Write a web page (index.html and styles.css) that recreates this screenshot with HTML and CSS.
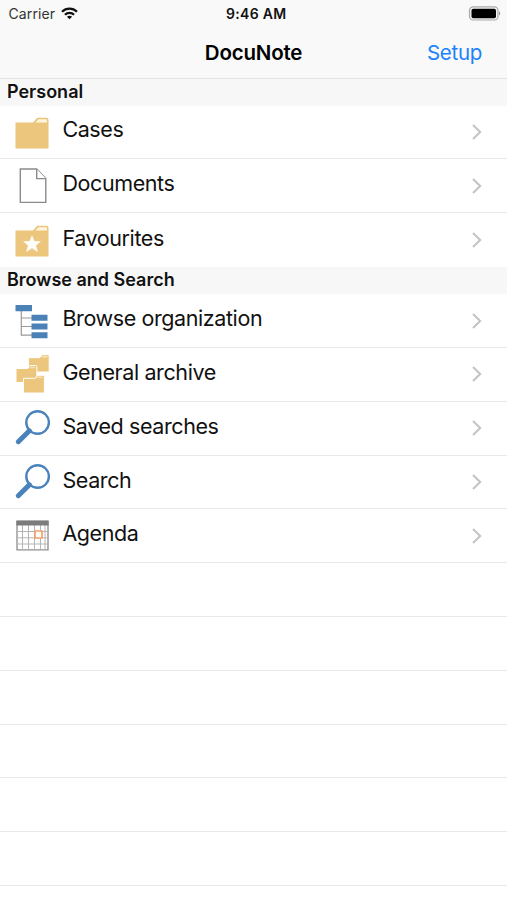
FILE: index.html
```html
<!DOCTYPE html>
<html lang="en">
<head>
<meta charset="utf-8">
<title>DocuNote</title>
<link rel="stylesheet" href="styles.css">
</head>
<body>
<svg width="0" height="0" class="defs">
  <symbol id="chevron" viewBox="0 0 12 18"><path d="M2 2l7.200 7L2 16" fill="none" stroke="#c3c3c5" stroke-width="2"/></symbol>
  <symbol id="lens" viewBox="0 0 36 36"><circle cx="23.600" cy="12.500" r="11.300" fill="none" stroke="#4a82bc" stroke-width="2.400"/><path d="M15.400 20.800L4.300 31.700" fill="none" stroke="#4a82bc" stroke-width="5" stroke-linecap="round"/></symbol>
</svg>
<header class="top">
  <div class="status">
    <div class="carrier"><span>Carrier</span>
      <svg class="wifi" width="17" height="13" viewBox="0 0 17 13"><g fill="none" stroke="#111" stroke-width="2.200"><path d="M1 4.700C5.200.5 11.800.5 16 4.700"/><path d="M3.900 7.700c2.600-2.500 6.600-2.500 9.200 0"/></g><path d="M5.900 9.700c1.500-1.400 3.700-1.400 5.200 0L8.500 12.300z" fill="#111"/></svg>
    </div>
    <div class="time">9:46 AM</div>
    <svg class="battery" width="33" height="15" viewBox="0 0 33 15"><rect x="1.500" y=".8" width="28.500" height="13.200" rx="3.600" fill="#f4f4f4" stroke="#aaa" stroke-width="1.200"/><rect x="3.500" y="2.700" width="24.500" height="9.500" rx="1.800" fill="#000"/><path d="M31 5.300c1.600.7 1.600 3.600 0 4.300z" fill="#999"/></svg>
  </div>
  <nav class="nav"><span></span><h1>DocuNote</h1><a class="setup">Setup</a></nav>
</header>
<main>
  <h2 class="section">Personal</h2>
  <div class="row">
    <svg class="icon" viewBox="0 0 36 36"><path d="M1.500 8.500h17.500l4.200-4.700h9q2.300 0 2.300 2.200v28.500h-33z" fill="#ecc67c"/><path d="M21.500 8.500l3-3.200h7.500q1 0 1 1.200v2z" fill="#fff5df"/></svg>
    <span class="label">Cases</span><svg class="chev"><use href="#chevron"/></svg>
  </div>
  <div class="row">
    <svg class="icon" viewBox="0 0 36 36"><g fill="#fff" stroke="#8b8b8b" stroke-width="1.400"><path d="M6.300 1h16.400l9.100 9.600v23.800H6.300z"/><path d="M22.700 1v9.600h9.100"/></g></svg>
    <span class="label">Documents</span><svg class="chev"><use href="#chevron"/></svg>
  </div>
  <div class="row">
    <svg class="icon" viewBox="0 0 36 36"><path d="M1.500 8.500h17.500l4.200-4.700h9q2.300 0 2.300 2.200v28.500h-33z" fill="#ecc67c"/><path d="M21.500 8.500l3-3.200h7.500q1 0 1 1.200v2z" fill="#fff5df"/><path d="M18 13.200l2.500 6h6.500l-5 4.300 1.900 6.500-5.900-3.800-5.900 3.800 1.900-6.500-5-4.300h6.500z" fill="#fff"/></svg>
    <span class="label">Favourites</span><svg class="chev"><use href="#chevron"/></svg>
  </div>
  <h2 class="section browse">Browse and Search</h2>
  <div class="row">
    <svg class="icon" viewBox="0 0 36 36"><path d="M7.300 6.500v25.700h11M7.300 15h11M7.300 23.500h11" fill="none" stroke="#999" stroke-width="1.200"/><path d="M1.500 2h16.500v6.200H1.500zM17.500 11.800h16v6h-16zM17.500 20.500h16v6h-16zM17.500 29.200h16v6h-16z" fill="#4a82b8"/></svg>
    <span class="label">Browse organization</span><svg class="chev"><use href="#chevron"/></svg>
  </div>
  <div class="row">
    <svg class="icon" viewBox="0 0 36 36"><g fill="#ecc67c" stroke="#fff" stroke-width="1"><path d="M14.500 1.700h11.300l2.400-3h5.700q1.300 0 1.300 1.300v16H14.500z"/><path d="M2 12.500h11.700l2.400-3h5.500q1.300 0 1.300 1.300v15.700H2z"/><path d="M9.500 22.300h11.700l2.400-3h5.500q1.300 0 1.300 1.300v16.400H9.500z"/></g><path d="M27.600 1.500L28.700 0h4.900v1.500zM15.500 12.300l1.300-1.500h4v1.500zM23 22.100l1.300-1.500h4v1.500z" fill="#f8e3b9"/></svg>
    <span class="label">General archive</span><svg class="chev"><use href="#chevron"/></svg>
  </div>
  <div class="row">
    <svg class="icon"><use href="#lens"/></svg>
    <span class="label">Saved searches</span><svg class="chev"><use href="#chevron"/></svg>
  </div>
  <div class="row">
    <svg class="icon"><use href="#lens"/></svg>
    <span class="label">Search</span><svg class="chev"><use href="#chevron"/></svg>
  </div>
  <div class="row">
    <svg class="icon" viewBox="0 0 36 36"><path d="M3 3.500h31v28.300H3z" fill="#fff" stroke="#8d8d8d" stroke-width="1.300"/><path d="M3 13.500h30M3 19.800h30M3 26h30M8.500 7v25M14.500 7v25M20.500 7v25M26.500 7v25M31 7v25" stroke="#b5b5b5" stroke-width="1"/><path d="M2.400 2.500h32.200v5H2.400z" fill="#7c7c7c"/><path d="M21 13h7v7h-7z" fill="#fff" stroke="#f3a16a" stroke-width="1.700"/></svg>
    <span class="label">Agenda</span><svg class="chev"><use href="#chevron"/></svg>
  </div>
  <div class="row"></div><div class="row"></div><div class="row"></div><div class="row"></div><div class="row"></div><div class="row"></div><div class="row"></div>
</main>
</body>
</html>
```
FILE: styles.css
```css
* { box-sizing: border-box; }
body { margin: 0; width: 507px; height: 900px; overflow: hidden; background: #fff; color: #111; font-family: Inter, "Liberation Sans", sans-serif; }
.defs { position: absolute; }
.top { height: 79px; background: #f9f9f9; border-bottom: 1px solid #e4e4e4; }
.status { display: grid; grid-template-columns: 1fr auto 1fr; height: 27px; align-items: center; padding: 0 6px 0 8.500px; font-size: 14px; }
.carrier { display: flex; align-items: center; gap: 6px; color: #333; letter-spacing: .1px; }
.time { padding-left: 3px; font-weight: 600; letter-spacing: .3px; }
.battery { justify-self: end; }
.nav { display: grid; grid-template-columns: 1fr auto 1fr; height: 51px; align-items: center; padding: 0 25px; }
h1 { margin: 0; font-size: 20.500px; font-weight: 600; letter-spacing: -.2px; color: #000; }
.setup { justify-self: end; font-size: 20.500px; letter-spacing: -.3px; color: #1a82fb; }
.section { margin: 0; height: 26.600px; padding-left: 7px; background: #f7f7f7; font-size: 18px; font-weight: 600; line-height: 25px; }
.browse { height: 27.300px; line-height: 26px; }
.row { display: flex; height: 53.800px; align-items: center; padding: 0 24px 0 14px; border-bottom: 1px solid #e9e9e9; }
.row:has(+ .browse) { border-bottom: 0; }
.icon { width: 36px; height: 36px; overflow: visible; }
.label { flex: 1; margin-left: 12.400px; padding-bottom: 5px; font-size: 21.500px; letter-spacing: -.4px; white-space: nowrap; line-height: 26px; }
.chev { width: 12px; height: 18px; }
```
